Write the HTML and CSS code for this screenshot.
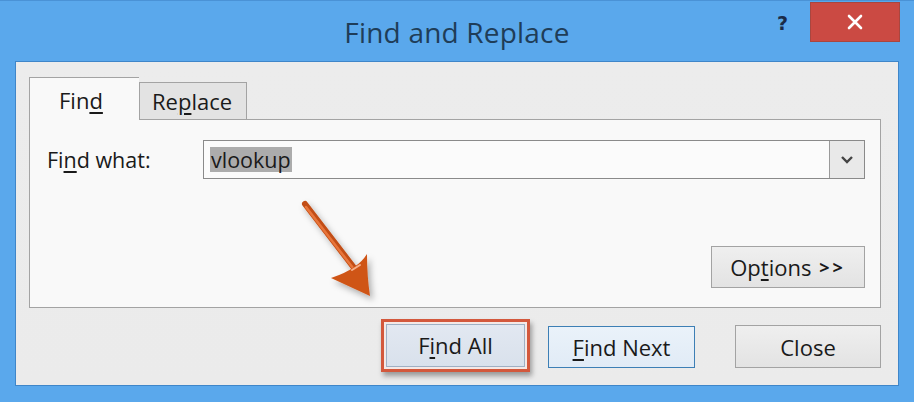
FILE: index.html
```html
<!DOCTYPE html>
<html>
<head>
<meta charset="utf-8">
<link rel="stylesheet" href="styles.css">
</head>
<body>
<div class="window">
  <div class="titlebar">
    <div></div>
    <div class="title">Find and Replace</div>
    <div class="controls">
      <span class="help">?</span>
      <span class="close-x">
        <svg width="18" height="18" viewBox="0 0 18 18"><path d="M3 3 L15 15 M15 3 L3 15" stroke="#fff" stroke-width="2.6" stroke-linecap="round"/></svg>
      </span>
    </div>
  </div>
  <div class="client">
    <div class="tabs">
      <div class="tab active">Fin<u>d</u></div>
      <div class="tab">Re<u>p</u>lace</div>
    </div>
    <div class="panel">
      <div class="row">
        <label class="label">Fi<u>n</u>d what:</label>
        <div class="combo">
          <div class="field"><span class="sel">vlookup</span></div>
          <div class="drop">
            <svg width="14" height="10" viewBox="0 0 14 10"><path d="M2 2 L7 7 L12 2" fill="none" stroke="#444" stroke-width="2.4"/></svg>
          </div>
        </div>
      </div>
      <div class="opts-row">
        <div class="btn options">Op<u>t</u>ions <span class="chev">&gt;&gt;</span></div>
      </div>
    </div>
    <div class="buttons">
      <div class="highlight"><div class="btn findall">F<u>i</u>nd All</div></div>
      <div class="btn findnext"><u>F</u>ind Next</div>
      <div class="btn closebtn">Close</div>
    </div>
  </div>
</div>
<svg class="arrow" width="914" height="402" viewBox="0 0 914 402">
  <defs>
    <filter id="sh" x="-50%" y="-50%" width="200%" height="200%">
      <feDropShadow dx="3" dy="4" stdDeviation="3" flood-color="#000" flood-opacity="0.3"/>
    </filter>
  </defs>
  <g filter="url(#sh)">
    <path d="M305 204 L358 273" stroke="#c24d14" stroke-width="6" stroke-linecap="round"/>
    <path d="M306 207 L353 268" stroke="#e8743a" stroke-width="2.5" stroke-linecap="round"/>
    <path d="M370 296 L331 278 Q346 273 354 267 Q362 262 367 254 Q367 276 370 296 Z" fill="#cf5519"/>
    <path d="M352 270 L360 265" stroke="#f6b08a" stroke-width="2" stroke-linecap="round"/>
  </g>
</svg>
</body>
</html>
```
FILE: styles.css
```css
html, body {
  margin: 0;
  padding: 0;
}
body {
  width: 914px;
  height: 402px;
  background: #5aa8ec;
  font-family: "Open Sans", "Noto Sans", "DejaVu Sans", sans-serif;
  position: relative;
  overflow: hidden;
}
.window {
  display: flex;
  flex-direction: column;
  height: 402px;
  border-top: 1px solid #4a92d6;
  box-sizing: border-box;
}
.titlebar {
  height: 60px;
  display: grid;
  grid-template-columns: 1fr auto 1fr;
  align-items: start;
}
.title {
  font-size: 28px;
  color: #1f3d58;
  padding-top: 12px;
  letter-spacing: 0.2px;
}
.controls {
  justify-self: end;
  display: flex;
  align-items: flex-start;
  margin-right: 14px;
  margin-top: 1px;
}
.help {
  font-family: "DejaVu Sans", sans-serif;
  font-weight: bold;
  font-size: 19px;
  color: #1a2b48;
  margin-top: 10px;
  margin-right: 22px;
}
.close-x {
  width: 90px;
  height: 40px;
  background: #cb4a43;
  border: 1px solid #a9463f;
  box-sizing: border-box;
  display: flex;
  align-items: center;
  justify-content: center;
}
.client {
  margin: 0 15px;
  height: 325px;
  background: linear-gradient(#ececec, #ebebeb);
  border: 1px solid #3f86c9;
  box-sizing: border-box;
  display: flex;
  flex-direction: column;
  padding: 15px 17px 0 13px;
}
.tabs {
  display: flex;
  align-items: flex-end;
  height: 42px;
  position: relative;
  z-index: 1;
}
.tab {
  font-size: 22px;
  color: #1a1a1a;
  box-sizing: border-box;
  border: 1px solid #a3a3a3;
  border-bottom: none;
}
.tab u, .label u, .btn u {
  text-decoration-thickness: 1.5px;
  text-underline-offset: 3px;
}
.tab.active {
  width: 110px;
  background: #f9f9f9;
  padding: 7px 0 0 29px;
  border-right: none;
  margin-bottom: -1px;
  height: 43px;
}
.tab:not(.active) {
  width: 108px;
  height: 37px;
  background: #e3e3e3;
  padding: 3px 0 0 12px;
}
.panel {
  height: 189px;
  background: #f9f9f9;
  border: 1px solid #a3a3a3;
  box-sizing: border-box;
  display: flex;
  flex-direction: column;
  padding: 20px 15px 19px 17px;
}
.row {
  display: flex;
  align-items: center;
}
.label {
  font-size: 21.5px;
  color: #1a1a1a;
  width: 156px;
}
.combo {
  flex: 1;
  display: flex;
  height: 39px;
  border: 1px solid #8a8a8a;
  box-sizing: border-box;
  background: #fbfbfb;
}
.field {
  flex: 1;
  display: flex;
  align-items: center;
  padding-left: 6px;
}
.sel {
  background: #acacac;
  font-size: 21.5px;
  color: #1a1a1a;
  padding: 0 1px;
  line-height: 25px;
}
.drop {
  width: 34px;
  border-left: 1px solid #9a9a9a;
  background: #e9e9e9;
  display: flex;
  align-items: center;
  justify-content: center;
}
.opts-row {
  margin-top: auto;
  display: flex;
  justify-content: flex-end;
}
.btn {
  box-sizing: border-box;
  display: flex;
  align-items: center;
  justify-content: center;
  font-size: 22px;
  color: #1a1a1a;
  border: 1px solid #a3a3a3;
  background: linear-gradient(#efefef, #e3e3e3);
  white-space: pre;
}
.chev {
  font-size: 18px;
  font-weight: bold;
  letter-spacing: 3px;
  margin-left: 2px;
}
.options {
  width: 154px;
  height: 42px;
}
.buttons {
  flex: 1;
  display: flex;
  align-items: center;
  justify-content: flex-end;
}
.highlight {
  width: 149px;
  height: 53px;
  box-sizing: border-box;
  border: 3px solid #d3583c;
  box-shadow: 2px 4px 5px rgba(0, 0, 0, 0.35);
  padding: 2px;
  background: #f4e8e6;
  margin-bottom: 3px;
}
.findall {
  width: 100%;
  height: 100%;
  border: 1px solid #9fb0c4;
  background: linear-gradient(#e2e8f1, #d9e1ec);
}
.findnext {
  width: 147px;
  height: 42px;
  margin-left: 18px;
  border: 1px solid #3d7fb5;
  background: linear-gradient(#eaf2fa, #e1ebf6);
}
.closebtn {
  width: 146px;
  height: 43px;
  margin-left: 40px;
}
.arrow {
  position: absolute;
  left: 0;
  top: 0;
  pointer-events: none;
}
```
